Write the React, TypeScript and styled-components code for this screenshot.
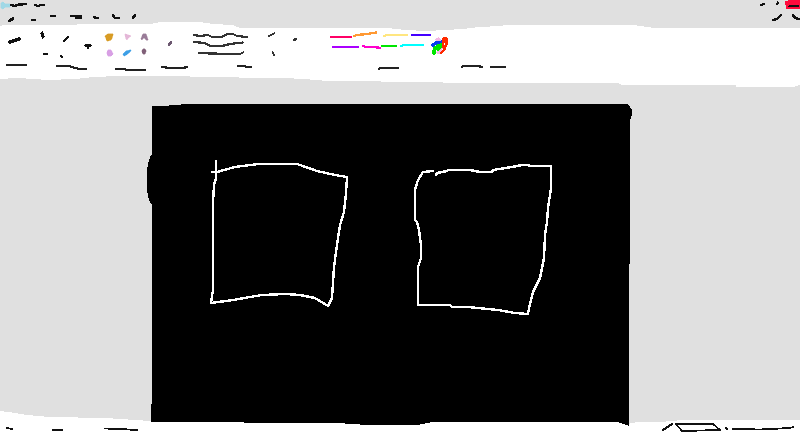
import React from 'react'

import styled, { createGlobalStyle } from 'styled-components'

const GlobalStyle = createGlobalStyle`
  html, body {
    margin: 0;
    padding: 0;
    background: #e0e0e0;
    overflow: hidden;
  }
`

const Page = styled.div`
  display: flex;
  flex-direction: column;
  width: 800px;
  height: 434px;
  overflow: hidden;
  background: #e0e0e0;
`

const Band = styled.section<{ $height: number }>`
  flex: none;
  height: ${(props) => props.$height}px;
`

const Sketch = styled.svg`
  display: block;
  width: 100%;
  height: 100%;
  overflow: visible;
  shape-rendering: crispEdges;
`

const Stroke = styled.polyline<{ $color?: string; $width?: number }>`
  fill: none;
  stroke: ${(props) => props.$color ?? '#111'};
  stroke-width: ${(props) => props.$width ?? 2};
  stroke-linecap: round;
  stroke-linejoin: round;
`

const Blob = styled.polygon<{ $color: string }>`
  fill: ${(props) => props.$color};
`

const PaletteBlob = styled(Blob)`
  stroke: ${(props) => props.$color};
  stroke-width: 0.8;
  stroke-linejoin: round;
`

type Line = { p: string; c?: string; w?: number }

const Lines = ({ items }: { items: Line[] }) => (
  <>
    {items.map((l) => (
      <Stroke key={l.p} points={l.p} $color={l.c} $width={l.w} />
    ))}
  </>
)

const titleStrokes: Line[] = [
  { p: '11.5,5 15,6 19,4.5 25.5,4', w: 2.6 },
  { p: '35,5 38,6 41,5 44.5,5', w: 2.2 },
  { p: '9,21 13,18.5', w: 3 },
  { p: '32,20 35.5,20', w: 2.2 },
  { p: '51,16 55,16', w: 2.2 },
  { p: '71,16 81,16 81,18 76,18', w: 2.8 },
  { p: '94,17 96,18 98,18', w: 2.4 },
  { p: '113,15.5 115,18 119,18', w: 2.4 },
  { p: '133,18 135,15', w: 2.6 },
  { p: '761,5 764,4', w: 2.4 },
  { p: '777,4 778,2.5', w: 2.2 },
  { p: '773,20 777,19 781,15', w: 2.6 },
  { p: '793,15 795,18 798.5,19', w: 2.6 },
  { p: '788.5,6.5 792,6 798,6', w: 1.8 },
]

const ribbonStrokes: Line[] = [
  { p: '10,42 19,39', w: 3.6 },
  { p: '42,33 43,37', w: 3.2 },
  { p: '64,41 68,37', w: 2.8 },
  { p: '85,45.5 91,45.5', w: 2.2 },
  { p: '88,46 88,48', w: 1.8 },
  { p: '44,54 47,54', w: 2.6 },
  { p: '61,56 62,57', w: 2.6 },
  { p: '169,45 171,42', c: '#6c5870', w: 2.6 },
  { p: '194,35 200,36 208,35 212,37 222,37 227,34 233,34 237,36 247,37', c: '#333', w: 2.2 },
  { p: '194,42 205,43 210,46 222,46 230,44 243,42.5', c: '#333', w: 2.2 },
  { p: '199,53 210,53.5 240,54 243,52.5', c: '#333', w: 2.2 },
  { p: '269,36 274,33.5', c: '#333', w: 2.2 },
  { p: '272.5,52 274,55', c: '#333', w: 2.2 },
  { p: '294,40 296,39', c: '#333', w: 2.4 },
  { p: '7,65 26,65', c: '#222', w: 2.2 },
  { p: '57,66 69,66 75,68 80,69 86,69', c: '#222', w: 2.2 },
  { p: '116,69 125,69 126,70 145,70', c: '#222', w: 2.2 },
  { p: '162,67 170,68 183,68 187,67', c: '#222', w: 2.2 },
  { p: '238,66 245,66 246,67 251,67', c: '#222', w: 2.2 },
  { p: '379,69 380,68 398,68', c: '#222', w: 2.2 },
  { p: '462,67 463,66 478,66 482,67', c: '#222', w: 2.2 },
  { p: '491,67 505,67', c: '#222', w: 2.2 },
  { p: '331,37 351,37', c: '#ff0066', w: 2.4 },
  { p: '354,36 357,35 367,34 373,33 376,32.5', c: '#ff9933', w: 2.4 },
  { p: '384,36 387,35 407,35', c: '#ffe680', w: 2.4 },
  { p: '412,35 430,35', c: '#4400ff', w: 2.4 },
  { p: '333,47 358,47', c: '#aa00ff', w: 2.4 },
  { p: '363,46 366,47 375,47 380,48', c: '#ff00cc', w: 2.4 },
  { p: '382,46 396,46', c: '#00e600', w: 2.4 },
  { p: '401,46 404,45 423,45', c: '#00ffff', w: 2.4 },
  { p: '438,40 441,46 439,52', c: '#f4b8e4', w: 5 },
  { p: '433,45 436,43 443,42', c: '#0a3cf0', w: 3.4 },
  { p: '434,53 434.5,49 438,46 442,45 438,49', c: '#00e600', w: 3.8 },
  { p: '441,53 444,50 446,45 447,40 446,38 444,38 443,43 443,47', c: '#ff2a00', w: 2.8 },
]

const paletteBlobs: { p: string; c: string }[] = [
  { p: '105,36 108,34 113,34 112,38 111,40 107,41 106,38', c: '#d89c25' },
  { p: '125,34 128,35 131,36 128,38 127,40 126,39', c: '#e4b8d8' },
  { p: '143,34 146,34 148,40 146,40 145,38 143,38 142,40 141,39', c: '#9a7c98' },
  { p: '108,50 111,50 113,54 111,56 108,56 107,53', c: '#d8a0e4' },
  { p: '123,54 126,51 131,50 130,52 126,55 124,56', c: '#3e9fe6' },
  { p: '143,49 145,49 146,51 145,54 143,54 142,51', c: '#806078' },
]

const firstSquare =
  '216,161 216,178 214,185 213,203 213,290 211,303 233,300 250,297 262,295 285,294 300,295 315,298 328,306 332,298 334,267 337,245 340,225 344,212 346,193 347,177 335,175 317,171 297,164 258,164 235,167 217,172 212,172'

const secondSquare =
  '436,175 437,173 447,171 448,170 470,170 480,172 492,172 493,170 512,167 522,165 528,165 530,166 551,166 551,188 548,208 547,222 545,235 544,258 540,278 533,292 529,308 528,314 515,313 498,310 468,307 452,307 450,305 418,305 418,267 421,258 421,245 419,230 417,222 415,220 415,190 418,180 423,172 433,171'

const statusStrokes: Line[] = [
  { p: '7,428 12,429', w: 1.8 },
  { p: '53,430 62,430', w: 1.8 },
  { p: '105,428.5 120,429 137,430', w: 1.8 },
  { p: '663,430 672,424', w: 2 },
  { p: '676,424 713,424 720,430 682,431 676,424', w: 1.8 },
  { p: '726,428 727,429', w: 1.8 },
  { p: '733,429 760,429.5 790,428 793,427', w: 1.8 },
]

export default function App() {
  return (
    <Page>
      <GlobalStyle />
      <Band $height={25}>
        <Sketch viewBox="0 0 800 25">
          <Blob $color="#ff0a3c" points="785,1 790,0 800,0 800,9 786,9" />
          <PaletteBlob $color="#a0d8e6" points="1,3 3,2 5,4 10,4 10,7 5,7 3,9 1,8" />
          <Lines items={titleStrokes} />
        </Sketch>
      </Band>
      <Band $height={55}>
        <Sketch viewBox="0 25 800 55">
          <Blob
            $color="#fff"
            points="0,26 4,25 150,24 160,22 200,22 213,24 233,25 240,28 387,28 405,30 427,31 463,29 479,27 500,26 505,25 633,25 640,26 655,28 800,28 800,85 793,87 736,87 736,85 622,85 618,83 450,83 436,82 325,81 319,80 300,79 288,78 190,77 190,76 112,76 100,77 93,77 76,79 45,80 36,79 16,78 0,79"
          />
          {paletteBlobs.map((b) => (
            <PaletteBlob key={b.p} points={b.p} $color={b.c} />
          ))}
          <Lines items={ribbonStrokes} />
        </Sketch>
      </Band>
      <Band $height={340}>
        <Sketch viewBox="0 80 800 340">
          <Blob
            $color="#000"
            points="152,106 169,106 169,105 181,105 181,104 628,104 630,107 632,110 632,115 631,118 630,120 629,426 617,422 433,422 417,425 367,425 337,423 151,422 151,406 150,405 152,404 152,205 149,200 147,190 147,170 149,160 151,155 152,155"
          />
          <Stroke points={firstSquare} $color="#fff" $width={2.4} />
          <Stroke points={secondSquare} $color="#fff" $width={2.4} />
        </Sketch>
      </Band>
      <Band $height={14}>
        <Sketch viewBox="0 420 800 14">
          <Blob
            $color="#fff"
            points="0,411 8,412 15,413 27,415 50,417 105,418 150,421 151,422 337,423 367,425 417,425 433,422 617,422 629,426 630,423 640,422 660,422 683,420 800,420 800,434 0,434"
          />
          <Lines items={statusStrokes} />
        </Sketch>
      </Band>
    </Page>
  )
}
